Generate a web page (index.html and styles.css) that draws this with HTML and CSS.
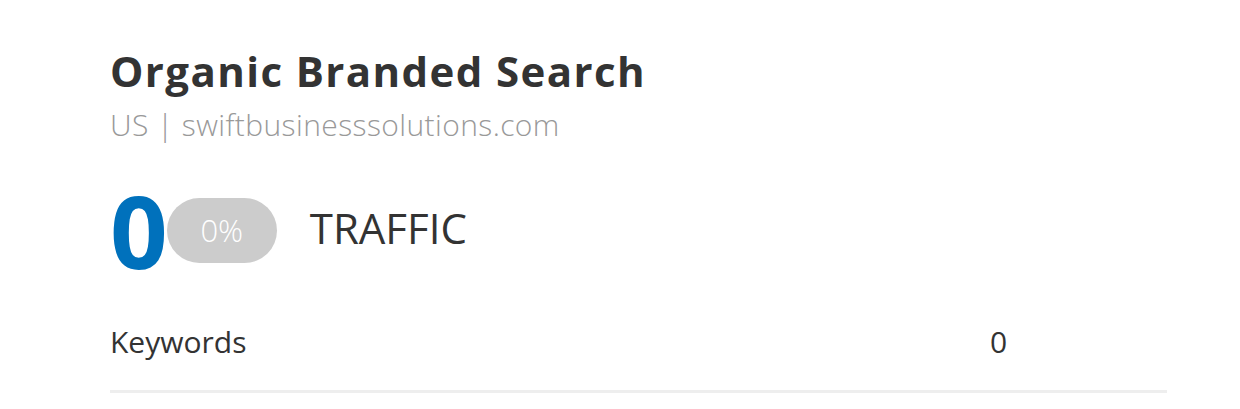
FILE: index.html
```html
<!DOCTYPE html>
<html>
<head>
<meta charset="utf-8">
<link rel="stylesheet" href="styles.css">
</head>
<body>
<div class="card">
  <h1 class="title">Organic Branded Search</h1>
  <div class="subtitle">US | swiftbusinesssolutions.com</div>
  <div class="metric">
    <span class="metric-value">0</span>
    <span class="pill">0%</span>
    <span class="metric-label">TRAFFIC</span>
  </div>
  <div class="row">
    <span class="row-label">Keywords</span>
    <span class="row-value">0</span>
  </div>
</div>
</body>
</html>
```
FILE: styles.css
```css
html, body {
  margin: 0;
  padding: 0;
  background: #ffffff;
}
body {
  font-family: "Open Sans", "Liberation Sans", sans-serif;
  color: #333333;
}
.card {
  width: 1057px;
  margin-left: 110px;
  padding-top: 45px;
}
.title {
  margin: 0;
  font-size: 42px;
  line-height: 52px;
  font-weight: 700;
  letter-spacing: 1.4px;
  color: #333333;
}
.subtitle {
  margin-top: 10px;
  font-size: 30px;
  line-height: 36px;
  font-weight: 300;
  letter-spacing: 0.4px;
  color: #999999;
}
.metric {
  display: flex;
  align-items: center;
  margin-top: 47px;
  height: 80px;
}
.metric-value {
  font-size: 101px;
  font-weight: 700;
  line-height: 80px;
  color: #0071bc;
  letter-spacing: -4px;
}
.pill {
  display: flex;
  align-items: center;
  justify-content: center;
  width: 110px;
  height: 65px;
  border-radius: 33px;
  background: #cccccc;
  color: #ffffff;
  font-size: 31px;
  font-weight: 300;
  margin-left: 3px;
}
.metric-label {
  margin-left: 33px;
  margin-bottom: 6px;
  font-size: 42px;
  color: #333333;
}
.row {
  display: flex;
  align-items: center;
  margin-top: 52px;
  padding-bottom: 28px;
  border-bottom: 3px solid #eeeeee;
}
.row-label {
  width: 880px;
  font-size: 30px;
  line-height: 40px;
}
.row-value {
  font-size: 30px;
  line-height: 40px;
}
```
